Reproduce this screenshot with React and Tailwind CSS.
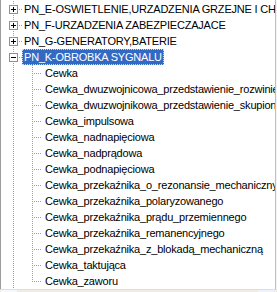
const groups = [
  { label: "PN_E-OSWIETLENIE,URZADZENIA GRZEJNE I CHLODZACE", open: false },
  { label: "PN_F-URZADZENIA ZABEZPIECZAJACE", open: false },
  { label: "PN_G-GENERATORY,BATERIE", open: false },
  { label: "PN_K-OBROBKA SYGNALU", open: true, selected: true },
]

const children = [
  "Cewka",
  "Cewka_dwuzwojnicowa_przedstawienie_rozwinięte",
  "Cewka_dwuzwojnikowa_przedstawienie_skupione",
  "Cewka_impulsowa",
  "Cewka_nadnapięciowa",
  "Cewka_nadprądowa",
  "Cewka_podnapięciowa",
  "Cewka_przekaźnika_o_rezonansie_mechanicznym",
  "Cewka_przekaźnika_polaryzowanego",
  "Cewka_przekaźnika_prądu_przemiennego",
  "Cewka_przekaźnika_remanencyjnego",
  "Cewka_przekaźnika_z_blokadą_mechaniczną",
  "Cewka_taktująca",
  "Cewka_zaworu",
]

const dot = { stroke: "#a0a0a0", strokeWidth: 1, strokeDasharray: "1 1", shapeRendering: "crispEdges" }

function GroupLines({ open }) {
  return (
    <svg width="21" height="16" viewBox="1 0 21 16" className="shrink-0">
      <line x1="13.5" y1="0" x2="13.5" y2="16" {...dot} />
      <line x1="15" y1="8.5" x2="22" y2="8.5" {...dot} />
      <rect x="9.5" y="4.5" width="8" height="8" fill="#fff" stroke="#8e8f8f" shapeRendering="crispEdges" />
      <line x1="11" y1="8.5" x2="16" y2="8.5" stroke="#000" shapeRendering="crispEdges" />
      {!open && <line x1="13.5" y1="6" x2="13.5" y2="11" stroke="#000" shapeRendering="crispEdges" />}
    </svg>
  )
}

function ChildLines({ last }) {
  return (
    <svg width="42" height="16" viewBox="1 0 42 16" className="shrink-0">
      <line x1="13.5" y1="0" x2="13.5" y2="16" {...dot} />
      <line x1="32.5" y1="0" x2="32.5" y2={last ? 9 : 16} {...dot} />
      <line x1="34" y1="8.5" x2="42" y2="8.5" {...dot} />
    </svg>
  )
}

function Label({ text, selected }) {
  return (
    <span
      className={
        selected
          ? "h-[16px] px-[1px] leading-[14px] whitespace-nowrap border border-dotted border-[#c9d6f2] bg-[#316ac5] text-white"
          : "h-[16px] px-[1px] leading-[14px] whitespace-nowrap border border-transparent text-black"
      }
    >
      {text}
    </span>
  )
}

export default function App() {
  return (
    <div
      className="w-[277px] h-[292px] overflow-hidden bg-white flex flex-col text-[11px] tracking-[-0.2px]"
      style={{ fontFamily: '"Liberation Sans", Arial, sans-serif' }}
    >
      <div className="flex flex-1 min-h-0">
        <div className="w-[1px] bg-[#9c9c9c] shrink-0" />
        <div className="flex-1 min-w-0 overflow-hidden pt-[1px] flex flex-col">
          {groups.map((g) => (
            <div key={g.label} className="h-[16px] flex items-center shrink-0">
              <GroupLines open={g.open} />
              <Label text={g.label} selected={g.selected} />
            </div>
          ))}
          {children.map((c, i) => (
            <div key={c} className="h-[16px] flex items-center shrink-0">
              <ChildLines last={i === children.length - 1} />
              <Label text={c} />
            </div>
          ))}
        </div>
        <div className="w-[1px] bg-[#e6d200] shrink-0" />
        <div className="w-[1px] bg-[#f4f4f4] shrink-0" />
      </div>
      <div className="h-[3px] shrink-0 flex bg-[#efede3] border-t border-[#e2dfd2]">
        <div className="w-[16px] ml-[1px] bg-[#f7f8fc]" />
        <div className="flex-1" />
        <div className="w-[16px] mr-[3px] bg-[#eef2fd]" />
      </div>
    </div>
  )
}
